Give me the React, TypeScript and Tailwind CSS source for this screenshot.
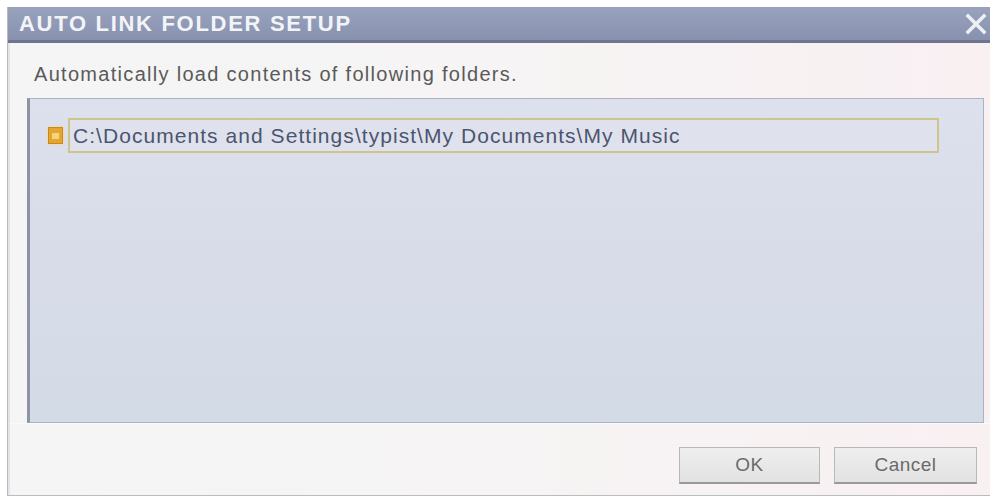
import React from 'react';

const FONT = { fontFamily: '"Liberation Sans", Arial, sans-serif' };

const App: React.FC = () => {
  return (
    <div className="w-[990px] h-[498px] bg-white pt-[7px] pl-[7px] overflow-hidden" style={FONT}>
      <div className="w-[983px] h-[489px] flex flex-col border-l border-b border-[#b9bcc4] bg-[#f2f2f2]">
        {/* title bar */}
        <div className="h-[36px] shrink-0 flex items-center justify-between bg-gradient-to-b from-[#99a2bd] to-[#8891ae] border-b-[3px] border-[#6d7590]">
          <span className="pl-[11px] text-[22px] font-bold text-[#f3f4f8] tracking-[1.7px]">AUTO LINK FOLDER SETUP</span>
          <svg width="22" height="22" viewBox="0 0 22 22" className="mr-[3px]">
            <path d="M3 3 L19 19 M19 3 L3 19" stroke="#eef0f6" strokeWidth="3.5" strokeLinecap="square" />
          </svg>
        </div>

        {/* body */}
        <div className="flex-1 flex flex-col border-l-[2px] border-[#e4e4e4] bg-gradient-to-r from-[#f5f5f5] via-[#f6f4f4] to-[#f9f0f2]">
          <div className="h-[55px] flex items-center pl-[24px] pt-[6px] text-[20px] text-[#5a5a5a] tracking-[1.3px]">
            Automatically load contents of following folders.
          </div>

          <div className="mx-[17px] mr-[6px] h-[325px] border border-[#aeb2c2] border-l-[3px] border-l-[#8d93a4] bg-gradient-to-b from-[#dde1ee] via-[#d8dce9] to-[#d3dbe6] pt-[19px] pl-[18px] pr-[44px]">
            <div className="flex items-center gap-[5px]">
              <span className="w-[15px] h-[17px] bg-[#e6a530] border border-[#c98a1c] shadow-[0_0_3px_#f3d98a] flex items-center justify-center">
                <span className="w-[7px] h-[6px] bg-[#f6d47c]" />
              </span>
              <div className="flex-1 h-[35px] flex items-center pl-[3px] border-[2px] border-[#cfc48e] bg-[#dfe2ec] text-[21px] text-[#4b5570] tracking-[1.05px]">
                C:\Documents and Settings\typist\My Documents\My Music
              </div>
            </div>
          </div>

          <div className="flex-1 flex justify-end items-start pt-[23px] pr-[13px] gap-[14px] border-t border-[#fafafa]">
            <button className="w-[141px] h-[37px] bg-gradient-to-b from-[#efefef] to-[#e2e2e2] border border-[#b8b8b8] border-b-[2px] border-b-[#9a9a9a] text-[19px] text-[#6a6a6a] tracking-[0.5px]" style={FONT}>
              OK
            </button>
            <button className="w-[143px] h-[37px] bg-gradient-to-b from-[#efefef] to-[#e2e2e2] border border-[#b8b8b8] border-b-[2px] border-b-[#9a9a9a] text-[19px] text-[#6a6a6a] tracking-[0.5px]" style={FONT}>
              Cancel
            </button>
          </div>
        </div>
      </div>
    </div>
  );
};

export default App;
